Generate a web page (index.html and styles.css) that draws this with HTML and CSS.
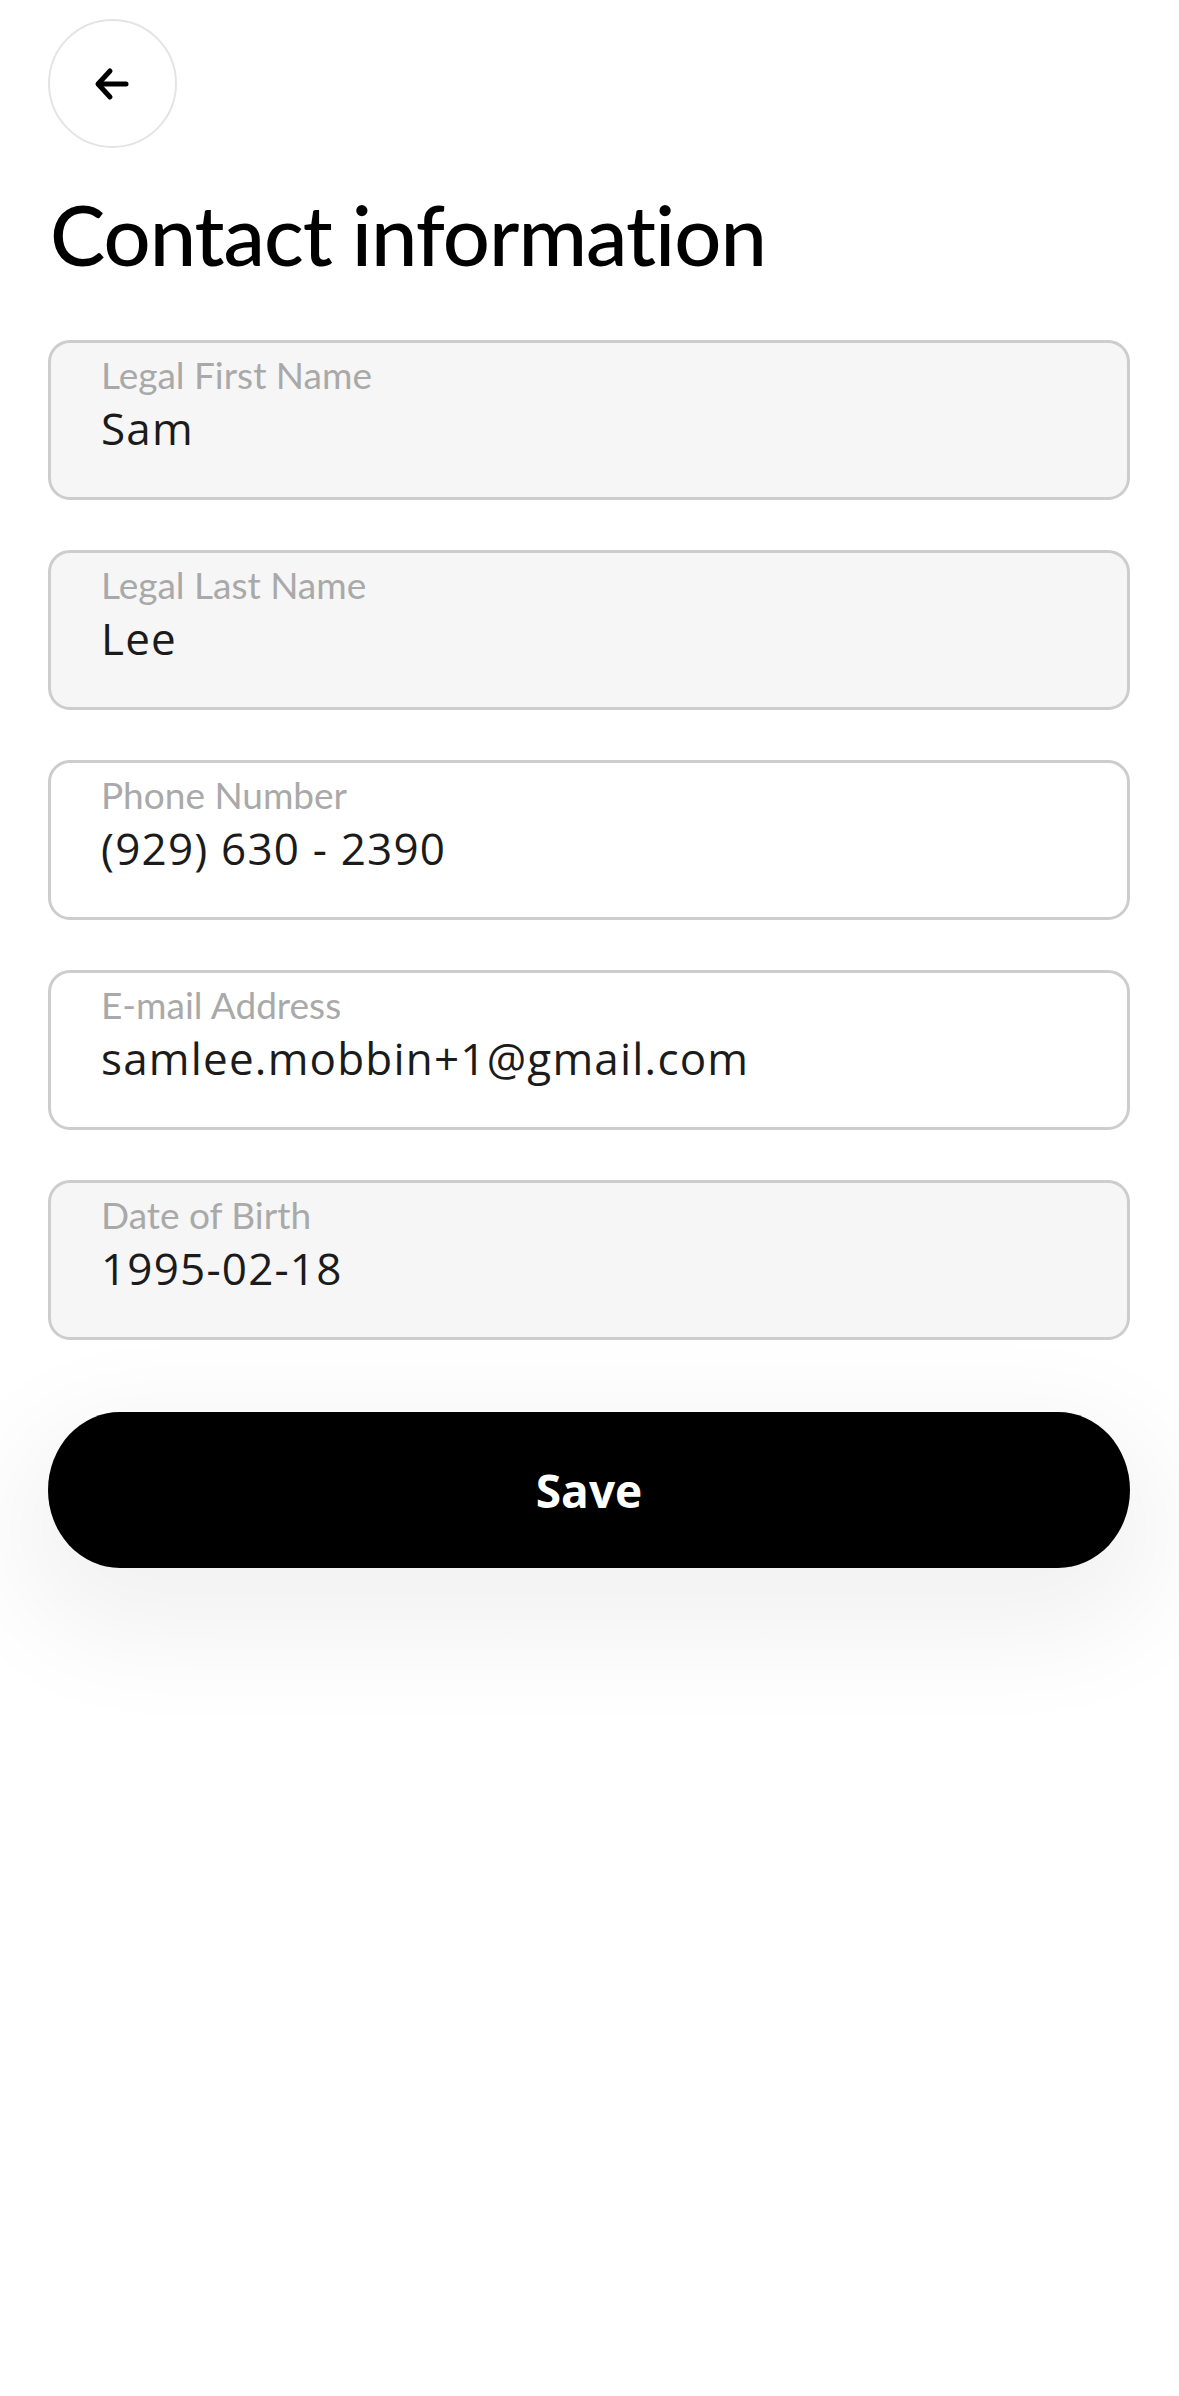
FILE: index.html
```html
<!DOCTYPE html>
<html lang="en">
<head>
<meta charset="utf-8">
<title>Contact information</title>
<link rel="stylesheet" href="styles.css">
</head>
<body>
<div class="screen">
  <header class="top">
    <button class="back" type="button" aria-label="Back">
      <svg width="36" height="34" viewBox="0 0 36 34" fill="none" stroke="#000" stroke-width="5" stroke-linecap="round" stroke-linejoin="round">
        <path d="M32 17H5"/>
        <path d="M16 4L4 17L16 30"/>
      </svg>
    </button>
  </header>
  <h1 class="title">Contact information</h1>
  <form class="form">
    <div class="field disabled">
      <span class="label">Legal First Name</span>
      <span class="value">Sam</span>
    </div>
    <div class="field disabled">
      <span class="label">Legal Last Name</span>
      <span class="value">Lee</span>
    </div>
    <div class="field">
      <span class="label">Phone Number</span>
      <span class="value">(929) 630 - 2390</span>
    </div>
    <div class="field">
      <span class="label">E-mail Address</span>
      <span class="value">samlee.mobbin+1@gmail.com</span>
    </div>
    <div class="field disabled">
      <span class="label">Date of Birth</span>
      <span class="value">1995-02-18</span>
    </div>
    <button class="save" type="button">Save</button>
  </form>
</div>
</body>
</html>
```

FILE: styles.css
```css
* { box-sizing: border-box; }
html, body {
  margin: 0;
  padding: 0;
  background: #ffffff;
}
body {
  font-family: "Open Sans", "Noto Sans", "Liberation Sans", sans-serif;
  color: #000;
}
.screen {
  width: 1179px;
  min-height: 2396px;
  padding: 19px 49px 0 48px;
}
.top {
  display: flex;
}
.back {
  width: 129px;
  height: 129px;
  border-radius: 50%;
  border: 2px solid #e4e4e4;
  background: #fff;
  display: flex;
  align-items: center;
  justify-content: center;
  padding: 0 2px 0 0;
}
.title {
  margin: 36px 0 0 2px;
  font-family: Lato, "Open Sans", sans-serif;
  font-size: 83px;
  font-weight: 500;
  line-height: 100px;
  letter-spacing: -1px;
}
.form {
  margin-top: 56px;
  display: flex;
  flex-direction: column;
  gap: 50px;
}
.field {
  height: 160px;
  border: 3px solid #cdcdcd;
  border-radius: 22px;
  background: #fff;
  padding: 12px 49px 0 50px;
  display: flex;
  flex-direction: column;
}
.field.disabled {
  background: #f6f6f6;
}
.label {
  font-family: Lato, "Open Sans", sans-serif;
  font-size: 37px;
  line-height: 40px;
  color: #a9a9a9;
}
.value {
  font-size: 44px;
  line-height: 48px;
  letter-spacing: 1.2px;
  color: #1b1b1b;
  margin-top: 9px;
}
.save {
  margin-top: 22px;
  height: 156px;
  border: none;
  border-radius: 72px / 78px;
  background: #000;
  color: #fff;
  font-family: "Open Sans", sans-serif;
  font-weight: 700;
  font-size: 46px;
  box-shadow: 0 40px 110px 30px rgba(0, 0, 0, 0.055);
}
```
